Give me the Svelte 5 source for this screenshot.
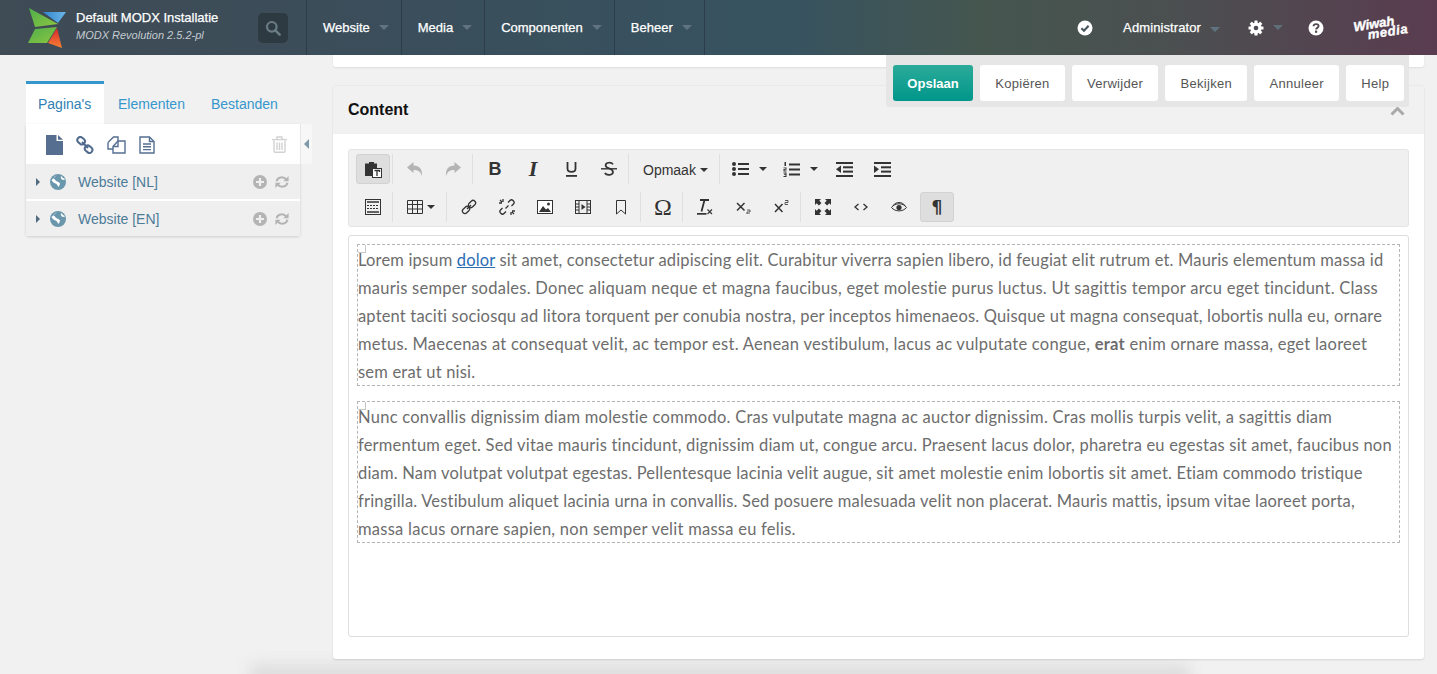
<script>
  const nav = ['Website', 'Media', 'Componenten', 'Beheer']
  const tabs = ["Pagina's", 'Elementen', 'Bestanden']
  const actions = ['Kopiëren', 'Verwijder', 'Bekijken', 'Annuleer', 'Help']
  const sites = ['Website [NL]', 'Website [EN]']
</script>

<div class="page">
  <header class="topbar">
    <div class="brand">
      <svg class="logo" width="40" height="40" viewBox="0 0 40 40">
        <defs>
          <linearGradient id="lg-green" x1="0" y1="0" x2="1" y2="1"><stop offset="0" stop-color="#4fae4e" /><stop offset="1" stop-color="#8cc63f" /></linearGradient>
          <linearGradient id="lg-blue" x1="0" y1="0" x2="1" y2="0"><stop offset="0" stop-color="#2f86cf" /><stop offset="1" stop-color="#6db6e8" /></linearGradient>
          <linearGradient id="lg-red" x1="0" y1="0" x2="0" y2="1"><stop offset="0" stop-color="#d8262c" /><stop offset="1" stop-color="#f58233" /></linearGradient>
        </defs>
        <polygon points="2,0 31,16 8,19" fill="url(#lg-green)" />
        <polygon points="16,4 39,4 31,15" fill="url(#lg-blue)" />
        <polygon points="8,21 30,19 20,35 1,35" fill="url(#lg-green)" />
        <polygon points="30,20 35,40 21,35" fill="url(#lg-red)" />
      </svg>
      <div class="brand-text">
        <div class="site-name">Default MODX Installatie</div>
        <div class="site-version">MODX Revolution 2.5.2-pl</div>
      </div>
      <div class="search">
        <svg width="16" height="16" viewBox="0 0 16 16"><circle cx="6.8" cy="6.8" r="4.8" fill="none" stroke="#6b7c85" stroke-width="2.2" /><path d="M10.4 10.4 14.6 14.6" stroke="#6b7c85" stroke-width="2.6" stroke-linecap="round" /></svg>
      </div>
    </div>
    <nav class="mainnav">
      {#each nav as item}
        <div class="nav-item">{item}<span class="caret"></span></div>
      {/each}
    </nav>
    <div class="usernav">
      <svg class="check" width="16" height="16" viewBox="0 0 16 16"><circle cx="8" cy="8" r="7.5" fill="#fff" /><path d="M4.4 8.2 7 10.8 11.6 5.8" fill="none" stroke="#46565c" stroke-width="2.1" /></svg>
      <div class="user">Administrator<span class="caret"></span></div>
      <div class="gear">
        <svg width="16" height="16" viewBox="0 0 16 16"><g fill="#fff"><circle cx="8" cy="8" r="5.6" /><rect x="6.4" y="0.5" width="3.2" height="15" rx="0.6" /><rect x="6.4" y="0.5" width="3.2" height="15" rx="0.6" transform="rotate(45 8 8)" /><rect x="6.4" y="0.5" width="3.2" height="15" rx="0.6" transform="rotate(90 8 8)" /><rect x="6.4" y="0.5" width="3.2" height="15" rx="0.6" transform="rotate(135 8 8)" /></g><circle cx="8" cy="8" r="2.3" fill="#4d4a52" /></svg>
        <span class="caret"></span>
      </div>
      <svg class="help" width="16" height="16" viewBox="0 0 16 16"><circle cx="8" cy="8" r="7.5" fill="#fff" /><path d="M5.5 6.2C5.7 3.4 10.6 3.4 10.6 6.1 10.6 7.9 8.1 7.8 8.1 9.6" fill="none" stroke="#524750" stroke-width="1.9" /><rect x="7" y="10.6" width="2.2" height="2.2" fill="#524750" /></svg>
      <div class="wiwah"><span>Wiwah</span><span class="media">media</span></div>
    </div>
  </header>

  <div class="workspace">
    <aside class="side">
      <div class="tabs">
        {#each tabs as tab, i}
          <div class="tab" class:active={i === 0}>{tab}</div>
        {/each}
      </div>
      <div class="tree-wrap">
        <div class="tree">
          <div class="tree-tools">
            <svg width="17" height="20" viewBox="0 0 17 20"><path d="M0 0H10.5V6H17V20H0Z M12 0 17 4.8H12Z" fill="#566f91" /></svg>
            <svg width="18" height="18" viewBox="0 0 18 18"><g fill="none" stroke="#4f6a8c" stroke-width="2"><rect x="1.2" y="1.6" width="8" height="6" rx="3" transform="rotate(40 5 4.6)" /><rect x="8.6" y="10.2" width="8" height="6" rx="3" transform="rotate(40 12.6 13.2)" /></g><path d="M6 6 12 12" stroke="#4f6a8c" stroke-width="2" /></svg>
            <svg width="19" height="18" viewBox="0 0 19 18"><g fill="none" stroke="#566f91" stroke-width="1.4"><path d="M1 6.5 6.5 1H11V5" /><path d="M1 6.5V13H6" /><path d="M6 10.5 11 5H18V17H6Z" fill="#fff" /><path d="M6 10.5H11V5" /></g></svg>
            <svg width="16" height="18" viewBox="0 0 16 18"><g fill="none" stroke="#566f91" stroke-width="1.4"><path d="M1 1H10.5L15 5.5V17H1Z" /><path d="M10.5 1V5.5H15" /><path d="M4 8H12M4 10.8H12M4 13.6H12" /></g></svg>
            <svg class="trash" width="15" height="17" viewBox="0 0 15 17"><g fill="none" stroke="#d2d2d2" stroke-width="1.4"><path d="M2 4.5V15.2C2 15.8 2.5 16.2 3 16.2H12C12.5 16.2 13 15.8 13 15.2V4.5" /><path d="M0 3.6H15" /><path d="M5 3.4V1H10V3.4" /><path d="M5 6.5V14M7.5 6.5V14M10 6.5V14" /></g></svg>
          </div>
          {#each sites as site}
            <div class="tree-row">
              <span class="arrow"></span>
              <svg class="globe" width="16" height="16" viewBox="0 0 16 16"><circle cx="8" cy="8" r="8" fill="#6b97ad" /><path d="M7.5 0.5C6 2 4 2.5 3.5 4.5 5 5 5.5 6.8 7 7.5 8.2 8 9.5 8 10 9.5 9.8 11 9 12 8.5 13 7.6 11.5 7 10 5.5 9.5 3.8 9 2.5 8 1.5 6 M11 1.8C12 3 12.8 4.4 14.8 5 15 6 13.5 6 12.5 5.8 11 5.5 10.5 3.5 11 1.8" fill="#fff" /></svg>
              <span class="site-label">{site}</span>
              <svg class="row-icon" width="14" height="14" viewBox="0 0 14 14"><circle cx="7" cy="7" r="7" fill="#b4b4b4" /><path d="M7 3V11M3 7H11" stroke="#efefef" stroke-width="2.2" /></svg>
              <svg class="row-icon" width="14" height="14" viewBox="0 0 14 14"><g fill="none" stroke="#b4b4b4" stroke-width="2"><path d="M1.6 6.2C2.4 2 8.6 0.8 11.2 4.6" /><path d="M12.4 7.8C11.6 12 5.4 13.2 2.8 9.4" /></g><path d="M13.6 1V6.2H8.4Z M.4 13V7.8H5.6Z" fill="#b4b4b4" /></svg>
            </div>
          {/each}
        </div>
        <div class="collapse"><span class="collapse-arrow"></span></div>
      </div>
    </aside>

    <main class="main">
      <div class="stub"></div>
      <section class="panel">
        <div class="panel-head">
          <h2>Content</h2>
          <svg class="chevron" width="15" height="10" viewBox="0 0 15 10"><path d="M1.5 8.5 7.5 2.5 13.5 8.5" fill="none" stroke="#a9a9a9" stroke-width="3" /></svg>
        </div>
        <div class="panel-body">
          <div class="toolbar">
            <div class="tb-row">
              <div class="tb-btn on"><svg width="17" height="17" viewBox="0 0 17 17"><path d="M0 2.5H4V1H9V2.5H12V7H7V15H0Z" fill="#333" /><rect x="7.5" y="7.5" width="9" height="9" fill="#fff" stroke="#333" /><path d="M9.5 9.5H14.5V11M12 9.5V15" fill="none" stroke="#333" stroke-width="1.3" /></svg></div>
              <span class="sep"></span>
              <div class="tb-btn"><svg width="16" height="14" viewBox="0 0 16 14"><path d="M0 5.5 6.5 0V3.5C12.5 3.5 15.5 7 15 14 13.5 9.5 11 8 6.5 8V11Z" fill="#b4b4b4" /></svg></div>
              <div class="tb-btn"><svg width="16" height="14" viewBox="0 0 16 14"><path d="M16 5.5 9.5 0V3.5C3.5 3.5 .5 7 1 14 2.5 9.5 5 8 9.5 8V11Z" fill="#b4b4b4" /></svg></div>
              <span class="sep"></span>
              <div class="tb-btn"><span class="glyph bold">B</span></div>
              <div class="tb-btn"><span class="glyph ital">I</span></div>
              <div class="tb-btn"><svg width="13" height="16" viewBox="0 0 13 16"><path d="M2.5 1V7.8C2.5 12 10.5 12 10.5 7.8V1" fill="none" stroke="#333" stroke-width="1.8" /><rect x="1" y="14" width="11" height="1.8" fill="#333" /></svg></div>
              <div class="tb-btn"><svg width="16" height="16" viewBox="0 0 16 16"><path d="M12 3.4C10.5 1 4.6 1 4.6 4.4 4.6 7.5 12 7 12 11 12 14.5 5.5 14.8 3.8 12" fill="none" stroke="#333" stroke-width="1.7" /><rect x="0" y="7.1" width="16" height="1.4" fill="#333" /></svg></div>
              <span class="sep"></span>
              <div class="tb-format">Opmaak<span class="tb-caret"></span></div>
              <span class="sep"></span>
              <div class="tb-split">
                <svg width="17" height="14" viewBox="0 0 17 14"><g fill="#333"><circle cx="2" cy="2" r="2" /><circle cx="2" cy="7" r="2" /><circle cx="2" cy="12" r="2" /><rect x="6" y="1" width="11" height="2" /><rect x="6" y="6" width="11" height="2" /><rect x="6" y="11" width="11" height="2" /></g></svg>
                <span class="tb-caret"></span>
              </div>
              <div class="tb-split">
                <svg width="17" height="15" viewBox="0 0 17 15"><g fill="#333"><rect x="6" y="1.5" width="11" height="2" /><rect x="6" y="6.5" width="11" height="2" /><rect x="6" y="11.5" width="11" height="2" /><path d="M1.5 0H3V4H1.5ZM.5 5.5H3.5V7.8H1.5V8.6H3.5V9.5H.5V7H2.5V6.3H.5ZM.5 10.5H3.5V15H.5V14H2.5V13.1H1V12.3H2.5V11.4H.5Z" /></g></svg>
                <span class="tb-caret"></span>
              </div>
              <div class="tb-btn"><svg width="17" height="15" viewBox="0 0 17 15"><g fill="#333"><rect y="0" width="17" height="2" /><rect x="7" y="4.3" width="10" height="2" /><rect x="7" y="8.6" width="10" height="2" /><rect y="13" width="17" height="2" /><path d="M5 3.5V11L0 7.3Z" /></g></svg></div>
              <div class="tb-btn"><svg width="17" height="15" viewBox="0 0 17 15"><g fill="#333"><rect y="0" width="17" height="2" /><rect x="7" y="4.3" width="10" height="2" /><rect x="7" y="8.6" width="10" height="2" /><rect y="13" width="17" height="2" /><path d="M0 3.5V11L5 7.3Z" /></g></svg></div>
            </div>
            <div class="tb-row">
              <div class="tb-btn"><svg width="16" height="16" viewBox="0 0 16 16"><rect x=".5" y=".5" width="15" height="15" fill="none" stroke="#333" /><path d="M2 3H14M2 13H14" stroke="#333" stroke-width="1.5" /><path d="M2 6.5H14M2 9.5H14" stroke="#333" stroke-dasharray="2 1" /></svg></div>
              <span class="sep"></span>
              <div class="tb-table">
                <svg width="16" height="14" viewBox="0 0 16 14"><path d="M.5.5H15.5V13.5H.5ZM.5 4.5H15.5M.5 9H15.5M5.5.5V13.5M10.5.5V13.5" fill="none" stroke="#333" /></svg>
                <span class="tb-caret"></span>
              </div>
              <span class="sep"></span>
              <div class="tb-btn"><svg width="16" height="16" viewBox="0 0 16 16"><g fill="none" stroke="#333" stroke-width="1.3"><rect x="7" y="2.5" width="8" height="5" rx="2.5" transform="rotate(-45 11 5)" /><rect x="1" y="8.5" width="8" height="5" rx="2.5" transform="rotate(-45 5 11)" /></g><path d="M6 10 10 6" stroke="#333" stroke-width="1.3" /></svg></div>
              <div class="tb-btn"><svg width="18" height="18" viewBox="0 0 18 18"><g fill="none" stroke="#333" stroke-width="1.3"><path d="M10 4.5 12 2.5C14 .5 17.5 4 15.5 6L13.5 8" /><path d="M8 13.5 6 15.5C4 17.5 .5 14 2.5 12L4.5 10" /><path d="M7.5 10.5 10.5 7.5" /><path d="M5 1V4M1 5H4M13 17V14M17 13H14M2 2 4 4M16 16 14 14" /></g></svg></div>
              <div class="tb-btn"><svg width="16" height="14" viewBox="0 0 16 14"><rect x=".5" y=".5" width="15" height="13" fill="#fff" stroke="#333" /><path d="M2 12 6 6 9 9.5 11 8 14 12Z" fill="#333" /><circle cx="11.5" cy="4" r="1.5" fill="#333" /></svg></div>
              <div class="tb-btn"><svg width="16" height="14" viewBox="0 0 16 14"><rect x=".5" y=".5" width="15" height="13" fill="none" stroke="#333" /><path d="M4 .5V13.5M12 .5V13.5M.5 4H4M.5 7H4M.5 10H4M12 4H15.5M12 7H15.5M12 10H15.5" stroke="#333" /><path d="M6.5 4V10L10.5 7Z" fill="#333" /></svg></div>
              <div class="tb-btn"><svg width="10" height="15" viewBox="0 0 10 15"><path d="M.5.5H9.5V14L5 10 .5 14Z" fill="none" stroke="#333" /></svg></div>
              <span class="sep"></span>
              <div class="tb-btn"><span class="glyph omega">Ω</span></div>
              <span class="sep"></span>
              <div class="tb-btn"><svg width="16" height="16" viewBox="0 0 16 16"><path d="M3 1H12M7.5 1 4.5 12.5" fill="none" stroke="#333" stroke-width="1.8" /><rect x="0" y="14" width="9.5" height="1.7" fill="#333" /><path d="M10.5 10.5 15 15M15 10.5 10.5 15" stroke="#333" stroke-width="1.1" /></svg></div>
              <div class="tb-btn"><svg width="15" height="14" viewBox="0 0 15 14"><path d="M1 3 8.5 10.5M8.5 3 1 10.5" stroke="#333" stroke-width="1.5" /><path d="M11 10H14V12H11V14H14" fill="none" stroke="#333" stroke-width=".8" /></svg></div>
              <div class="tb-btn"><svg width="15" height="14" viewBox="0 0 15 14"><path d="M1 4 8.5 12M8.5 4 1 12" stroke="#333" stroke-width="1.5" /><path d="M11 .5H14V2.5H11V4.5H14" fill="none" stroke="#333" stroke-width=".8" /></svg></div>
              <span class="sep"></span>
              <div class="tb-btn"><svg width="16" height="16" viewBox="0 0 16 16"><path d="M0 0H6L4.3 1.7 6.5 3.9 3.9 6.5 1.7 4.3 0 6ZM16 0V6L14.3 4.3 12.1 6.5 9.5 3.9 11.7 1.7 10 0ZM0 16V10L1.7 11.7 3.9 9.5 6.5 12.1 4.3 14.3 6 16ZM16 16H10L11.700 14.3 9.5 12.1 12.1 9.5 14.3 11.7 16 10Z" fill="#333" /></svg></div>
              <div class="tb-btn"><svg width="14" height="8" viewBox="0 0 14 8"><path d="M4.5 1 1 4 4.5 7M9.5 1 13 4 9.5 7" fill="none" stroke="#333" stroke-width="1.3" /></svg></div>
              <div class="tb-btn"><svg width="16" height="10" viewBox="0 0 16 10"><path d="M.5 5.5C4 .5 12 .5 15.5 5.5 12 10 4 10 .5 5.5Z" fill="none" stroke="#333" /><circle cx="8" cy="5.5" r="2.6" fill="#333" /><path d="M2 3.5C5-.5 11-.5 14 3.5" fill="none" stroke="#333" stroke-width="1" /></svg></div>
              <div class="tb-btn on"><span class="glyph pilcrow">¶</span></div>
            </div>
          </div>

          <div class="editor">
            <p class="blk">
              <span class="blk-tag"></span>
              <span class="tight">Lorem ipsum <a href="#dolor">dolor</a> sit amet, consectetur adipiscing elit. Curabitur viverra sapien libero, id feugiat elit rutrum et. Mauris elementum massa id</span><br />
              <span class="loose">mauris semper sodales. Donec aliquam neque et magna faucibus, eget molestie purus luctus. Ut sagittis tempor arcu eget tincidunt. Class</span><br />
              <span class="tight">aptent taciti sociosqu ad litora torquent per conubia nostra, per inceptos himenaeos. Quisque ut magna consequat, lobortis nulla eu, ornare</span><br />
              <span class="loose">metus. Maecenas at consequat velit, ac tempor est. Aenean vestibulum, lacus ac vulputate congue, <strong>erat</strong> enim ornare massa, eget laoreet</span><br />
              sem erat ut nisi.
            </p>
            <p class="blk">
              <span class="blk-tag"></span>
              <span class="loose">Nunc convallis dignissim diam molestie commodo. Cras vulputate magna ac auctor dignissim. Cras mollis turpis velit, a sagittis diam</span><br />
              fermentum eget. Sed vitae mauris tincidunt, dignissim diam ut, congue arcu. Praesent lacus dolor, pharetra eu egestas sit amet, faucibus non<br />
              diam. Nam volutpat volutpat egestas. Pellentesque lacinia velit augue, sit amet molestie enim lobortis sit amet. Etiam commodo tristique<br />
              fringilla. Vestibulum aliquet lacinia urna in convallis. Sed posuere malesuada velit non placerat. Mauris mattis, ipsum vitae laoreet porta,<br />
              <span class="loose">massa lacus ornare sapien, non semper velit massa eu felis.</span>
            </p>
          </div>
        </div>
      </section>
    </main>
  </div>

  <div class="actionbar">
    <div class="act primary">Opslaan</div>
    {#each actions as a}
      <div class="act">{a}</div>
    {/each}
  </div>
  <div class="bottom-shadow"></div>
</div>

<style>
  :global(body) {
    margin: 0;
    background: #f1f1f1;
    overflow: hidden;
  }

  .page {
    position: relative;
    height: 674px;
    overflow: hidden;
    font-family: "Liberation Sans", Arial, sans-serif;
  }

  /* --- Top bar --- */

  .topbar {
    display: flex;
    height: 55px;
    background: linear-gradient(90deg, #3f4b55 0%, #3a4e5b 30%, #375360 55%, #45564f 68%, #4b4f50 82%, #5a3c50 100%);
    color: #fff;
  }

  .brand {
    display: flex;
    align-items: center;
    width: 306px;
    padding-left: 27px;
    box-sizing: border-box;
  }

  .logo {
    flex-shrink: 0;
    margin-top: 1px;
  }

  .brand-text {
    margin-left: 9px;
    width: 182px;
  }

  .site-name {
    font-size: 13px;
    -webkit-text-stroke: 0.25px #fff;
    line-height: 16px;
    margin-top: -2px;
  }

  .site-version {
    font-size: 11px;
    font-style: italic;
    color: #c4cbd0;
    line-height: 16px;
    margin-top: 1px;
  }

  .search {
    display: flex;
    align-items: center;
    justify-content: center;
    width: 30px;
    height: 30px;
    background: #2d3a42;
    border-radius: 5px;
  }

  .mainnav {
    display: flex;
    height: 55px;
    border-left: 1px solid #2c3d49;
  }

  .nav-item {
    display: flex;
    align-items: center;
    padding: 0 12px 0 16px;
    border-right: 1px solid #2c3d49;
    font-size: 13px;
    -webkit-text-stroke: 0.25px #fff;
  }

  .caret {
    display: inline-block;
    width: 0;
    height: 0;
    margin-left: 9px;
    border: 5px solid transparent;
    border-top: 5px solid #5f7480;
    border-bottom: 0;
  }

  .usernav {
    display: flex;
    align-items: center;
    margin-left: auto;
    color: #fff;
  }

  .check {
    margin-right: 30px;
  }

  .user {
    font-size: 13px;
    letter-spacing: 0.1px;
    -webkit-text-stroke: 0.25px #fff;
  }

  .gear {
    display: flex;
    align-items: center;
    margin-left: 28px;
  }

  .gear .caret {
    border-top-color: #5f6e79;
  }

  .help {
    margin-left: 25px;
  }

  .wiwah {
    display: flex;
    flex-direction: column;
    width: 56px;
    margin: 0 27px 0 30px;
    font-size: 13px;
    font-weight: 700;
    font-style: italic;
    line-height: 10px;
    -webkit-text-stroke: 0.4px #fff;
    transform: rotate(-9deg);
  }

  .wiwah .media {
    margin-left: 13px;
    letter-spacing: 0.6px;
  }

  /* --- Workspace --- */

  .workspace {
    display: flex;
    padding-right: 13px;
  }

  .side {
    width: 286px;
    margin: 26px 21px 0 26px;
    flex-shrink: 0;
  }

  .tabs {
    display: flex;
    height: 43px;
    font-size: 14px;
  }

  .tab {
    padding: 8px 12px 0 14px;
    color: #3697cd;
    line-height: 31px;
    height: 35px;
  }

  .tab.active {
    width: 78px;
    box-sizing: border-box;
    padding: 5px 0 0 12px;
    height: 43px;
    background: #fff;
    border-top: 3px solid #3697cd;
    color: #2f81b5;
  }

  .tree-wrap {
    display: flex;
    align-items: flex-start;
  }

  .tree {
    width: 274px;
    background: #fff;
    box-shadow: 0 1px 3px rgba(0, 0, 0, 0.15);
    border-radius: 0 0 3px 3px;
  }

  .tree-tools {
    display: flex;
    align-items: center;
    gap: 13px;
    height: 40px;
    box-sizing: border-box;
    padding: 1px 13px 0 20px;
  }

  .trash {
    margin-left: auto;
  }

  .tree-row {
    display: flex;
    align-items: center;
    height: 35px;
    padding-right: 11px;
    background: #efefef;
    margin-bottom: 2px;
    font-size: 14px;
    color: #4d7b98;
  }

  .tree-row:last-child {
    margin-bottom: 0;
  }

  .arrow {
    width: 0;
    height: 0;
    margin-left: 10px;
    border-left: 4px solid #506a80;
    border-top: 4px solid transparent;
    border-bottom: 4px solid transparent;
  }

  .globe {
    margin-left: 10px;
  }

  .site-label {
    margin: 0 auto 0 12px;
    padding-top: 1px;
  }

  .row-icon {
    margin-left: 8px;
  }

  .collapse {
    display: flex;
    align-items: center;
    justify-content: center;
    width: 12px;
    height: 40px;
    background: #f7f7f7;
    border-left: 1px solid #e6e6e6;
    border-radius: 0 3px 3px 0;
    box-sizing: border-box;
  }

  .collapse-arrow {
    width: 0;
    height: 0;
    border-right: 5px solid #7f98aa;
    border-top: 5px solid transparent;
    border-bottom: 5px solid transparent;
  }

  /* --- Main column --- */

  .main {
    flex: 1;
    min-width: 0;
  }

  .stub {
    height: 12px;
    background: #fff;
    border-radius: 0 0 3px 3px;
    box-shadow: 0 1px 2px rgba(0, 0, 0, 0.08);
  }

  .panel {
    margin-top: 18px;
    height: 574px;
    background: #fff;
    border-radius: 3px;
    box-shadow: 0 1px 2px rgba(0, 0, 0, 0.12);
  }

  .panel-head {
    display: flex;
    align-items: center;
    justify-content: space-between;
    height: 49px;
    padding: 0 19px 0 15px;
    background: #f1f1f1;
    border-radius: 3px 3px 0 0;
    box-shadow: inset 0 1px 0 #eaeaea;
  }

  .panel-head h2 {
    margin: 0;
    font-size: 16px;
    font-weight: 700;
    color: #111;
  }

  .chevron {
    margin-top: 2px;
  }

  .panel-body {
    padding: 15px 15px 0;
  }

  /* --- Editor toolbar --- */

  .toolbar {
    height: 78px;
    box-sizing: border-box;
    padding: 4px 7px 0;
    background: #f0f0f0;
    border: 1px solid #e4e4e4;
    border-radius: 3px;
  }

  .tb-row {
    display: flex;
    align-items: center;
    height: 30px;
    margin-bottom: 8px;
  }

  .tb-btn {
    display: flex;
    align-items: center;
    justify-content: center;
    flex-shrink: 0;
    width: 34px;
    height: 30px;
    margin-right: 4px;
    box-sizing: border-box;
    border-radius: 3px;
  }

  .tb-btn.on {
    background: #dedede;
    border: 1px solid #d2d2d2;
  }

  .sep {
    flex-shrink: 0;
    width: 1px;
    height: 30px;
    margin: 0 5px 0 -2px;
    background: #dfdfdf;
  }

  .tb-format {
    display: flex;
    align-items: center;
    width: 83px;
    margin-right: 4px;
    padding: 1px 0 0 9px;
    box-sizing: border-box;
    font-size: 14px;
    color: #333;
  }

  .tb-caret {
    width: 0;
    height: 0;
    margin-left: 4px;
    border: 4px solid transparent;
    border-top: 4px solid #333;
    border-bottom: 0;
  }

  .tb-split {
    display: flex;
    align-items: center;
    width: 51px;
    padding-left: 7px;
    box-sizing: border-box;
  }

  .tb-split .tb-caret {
    margin-left: 10px;
  }

  .tb-table {
    display: flex;
    align-items: center;
    width: 46px;
    margin-right: 4px;
    padding-left: 9px;
    box-sizing: border-box;
  }

  .glyph {
    color: #333;
    line-height: 1;
  }

  .bold {
    font-size: 18px;
    font-weight: 700;
  }

  .ital {
    font-family: "Liberation Serif", serif;
    font-size: 22px;
    font-style: italic;
    font-weight: 700;
  }

  .omega {
    font-family: "Liberation Serif", serif;
    font-size: 24px;
  }

  .pilcrow {
    font-family: "DejaVu Sans", sans-serif;
    font-size: 17px;
    font-weight: 700;
  }

  /* --- Editor body --- */

  .editor {
    margin-top: 8px;
    height: 402px;
    box-sizing: border-box;
    padding: 8px;
    background: #fff;
    border: 1px solid #dedede;
    border-radius: 3px;
  }

  .blk {
    position: relative;
    box-sizing: border-box;
    height: 142px;
    margin: 0 0 15px;
    padding: 1px 0 0;
    border: 1px dashed #b5b5b5;
    font-family: Lato, sans-serif;
    font-size: 16.5px;
    line-height: 28px;
    letter-spacing: 0.2px;
    color: #6d6d6d;
    white-space: nowrap;
  }

  /* Lato runs a little off the original webfont per line; nudge tracking so lines end in the same place */
  .tight {
    letter-spacing: 0.17px;
  }

  .loose {
    letter-spacing: 0.26px;
  }

  .blk strong {
    font-weight: 700;
  }

  .blk a {
    color: #2a6db5;
    text-decoration: underline;
  }

  .blk-tag {
    position: absolute;
    top: 0;
    left: 0;
    width: 7px;
    height: 7px;
    border: 1px solid #c8c8c8;
    border-top: 0;
    border-left: 0;
  }

  /* --- Floating action bar --- */

  .actionbar {
    position: absolute;
    top: 55px;
    left: 886px;
    display: flex;
    gap: 7px;
    padding: 10px 5px 6px 7px;
    background: #e6e6e6;
    border-radius: 0 0 3px 3px;
  }

  .act {
    display: flex;
    align-items: center;
    justify-content: center;
    height: 36px;
    padding: 0 15.2px;
    background: #fff;
    border-radius: 3px;
    font-size: 13px;
    letter-spacing: 0.3px;
    color: #555;
  }

  .act.primary {
    width: 80px;
    padding: 0;
    box-sizing: border-box;
    background: linear-gradient(180deg, #2bab99, #00968a);
    color: #fff;
    font-weight: 700;
    letter-spacing: 0;
  }

  /* soft smudge below the panel, from the window shadow */
  .bottom-shadow {
    position: absolute;
    left: 250px;
    top: 664px;
    width: 940px;
    height: 40px;
    background: #dedede;
    filter: blur(7px);
    pointer-events: none;
    z-index: -1;
  }
</style>
